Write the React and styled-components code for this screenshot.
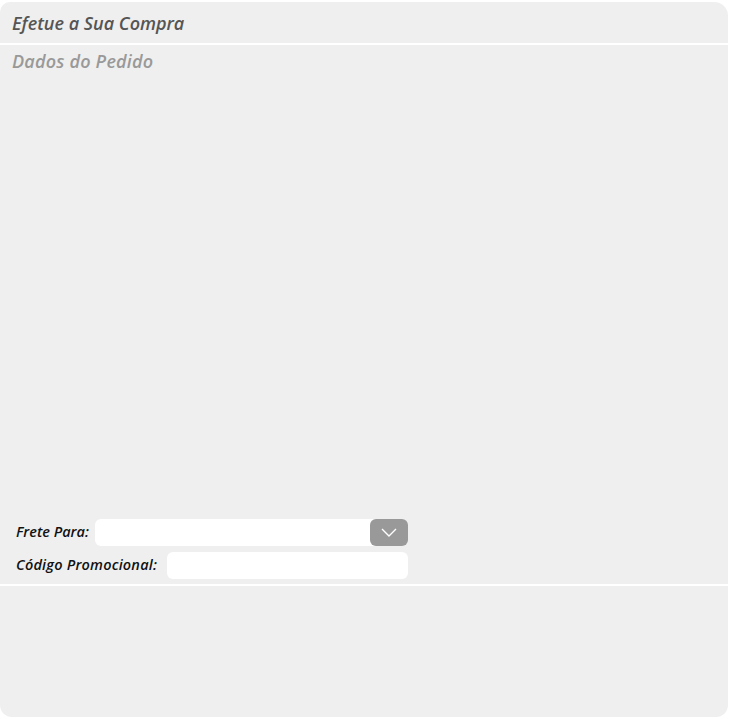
import React from 'react';
import styled, { createGlobalStyle } from 'styled-components';

const GlobalStyle = createGlobalStyle`
  html, body {
    margin: 0;
    padding: 0;
    background: #ffffff;
  }
  body {
    font-family: "Open Sans", "Liberation Sans", sans-serif;
  }
`;

const Panel = styled.div`
  margin: 2px 2px 0 0;
  width: 728px;
  height: 715px;
  background: #efefef;
  border-radius: 10px 14px 12px 12px;
  display: flex;
  flex-direction: column;
  overflow: hidden;
`;

const Header = styled.div`
  height: 41px;
  display: flex;
  align-items: center;
  padding-left: 12px;
  font-size: 18px;
  font-style: italic;
  font-weight: 600;
  color: #555555;
`;

const Divider = styled.div`
  height: 2px;
  background: #ffffff;
`;

const Section = styled.div`
  height: 539px;
  display: flex;
  flex-direction: column;
  justify-content: space-between;
  padding: 4px 0 5px 12px;
  box-sizing: border-box;
`;

const SectionTitle = styled.div`
  font-size: 18px;
  font-style: italic;
  font-weight: 600;
  color: #999999;
  letter-spacing: 0.2px;
`;

const Form = styled.div`
  display: flex;
  flex-direction: column;
  gap: 6px;
  padding-left: 4px;
`;

const Row = styled.div`
  display: flex;
  align-items: center;
  height: 27px;
`;

const Label = styled.span`
  font-size: 14.5px;
  font-style: italic;
  font-weight: 600;
  color: #111111;
  letter-spacing: ${(p) => p.$spacing || 0}px;
  width: ${(p) => p.$width}px;
  flex-shrink: 0;
  white-space: nowrap;
  padding-bottom: 3px;
`;

const Field = styled.div`
  position: relative;
  width: ${(p) => p.$width}px;
  height: 27px;
  background: #ffffff;
  border-radius: 6px;
`;

const DropButton = styled.div`
  position: absolute;
  right: 0;
  top: 0;
  width: 38px;
  height: 27px;
  background: #999999;
  border-radius: 6px;
  display: flex;
  align-items: center;
  justify-content: center;
`;

const Footer = styled.div`
  flex: 1;
`;

export default function App() {
  return (
    <>
      <GlobalStyle />
      <Panel>
        <Header>Efetue a Sua Compra</Header>
        <Divider />
        <Section>
          <SectionTitle>Dados do Pedido</SectionTitle>
          <Form>
            <Row>
              <Label $width={79}>Frete Para:</Label>
              <Field $width={313}>
                <DropButton>
                  <svg width="16" height="9" viewBox="0 0 16 9" fill="none">
                    <path d="M1 1 L8 8 L15 1" stroke="#ffffff" strokeWidth="1.4" />
                  </svg>
                </DropButton>
              </Field>
            </Row>
            <Row>
              <Label $width={151} $spacing={0.2}>Código Promocional:</Label>
              <Field $width={241} />
            </Row>
          </Form>
        </Section>
        <Divider />
        <Footer />
      </Panel>
    </>
  );
}
